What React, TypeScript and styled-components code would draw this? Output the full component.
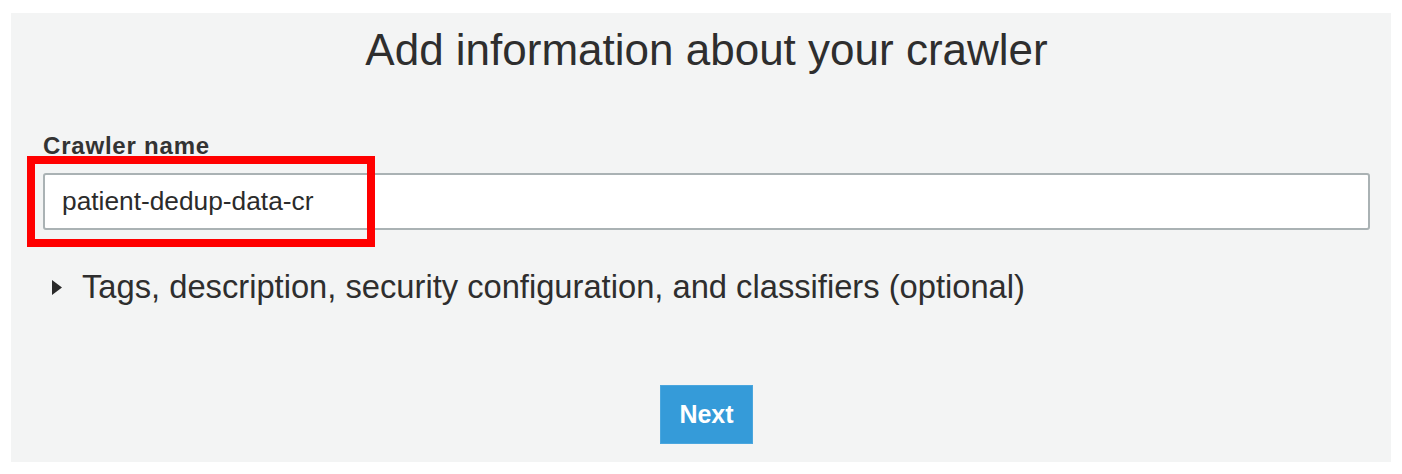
import React from "react";
import styled, { createGlobalStyle } from "styled-components";

const Global = createGlobalStyle`
  html, body { margin: 0; padding: 0; background: #ffffff; }
  body { font-family: "Liberation Sans", Arial, Helvetica, sans-serif; }
  * { box-sizing: border-box; }
`;

const Page = styled.div`
  padding: 13px 11px 0 11px;
`;

const Panel = styled.section`
  width: 1380px;
  height: 449px;
  background: #f3f4f4;
  padding: 12px 21px 0 32px;
  display: flex;
  flex-direction: column;
  color: #2e2e2e;
`;

const Title = styled.h1`
  margin: 0;
  font-size: 44px;
  font-weight: 400;
  line-height: 50px;
  text-align: center;
  color: #2e2e2e;
`;

const Field = styled.div`
  margin-top: 57px;
  display: flex;
  flex-direction: column;
  gap: 13px;
`;

const Label = styled.label`
  font-size: 24px;
  font-weight: 700;
  line-height: 28px;
  letter-spacing: 0.8px;
  color: #333;
`;

const InputWrap = styled.div`
  position: relative;
`;

const Input = styled.div`
  height: 57px;
  background: #fff;
  border: 2px solid #aab2b4;
  border-radius: 3px;
  padding: 0 17px;
  display: flex;
  align-items: center;
  font-size: 26.3px;
  color: #2b2b2b;
`;

const Highlight = styled.div`
  position: absolute;
  left: -16px;
  top: -17px;
  width: 348px;
  height: 91px;
  border: 8px solid #ff0000;
  pointer-events: none;
`;

const Expander = styled.div`
  margin-top: 38px;
  display: flex;
  align-items: center;
  gap: 20px;
  padding-left: 9px;
  font-size: 32.7px;
  line-height: 38px;
  color: #2e2e2e;
`;

const Caret = styled.svg`
  flex: none;
  width: 10px;
  height: 15px;
`;

const Actions = styled.div`
  margin-top: 79px;
  display: flex;
  justify-content: center;
`;

const Button = styled.button`
  width: 93px;
  height: 59px;
  background: #359bd9;
  border: 1px solid #4aa6de;
  color: #fff;
  font-family: "Liberation Sans", Arial, sans-serif;
  font-size: 25px;
  font-weight: 700;
  padding: 0;
`;

export default function App() {
  return (
    <Page>
      <Global />
      <Panel>
        <Title>Add information about your crawler</Title>
        <Field>
          <Label>Crawler name</Label>
          <InputWrap>
            <Input>patient-dedup-data-cr</Input>
            <Highlight />
          </InputWrap>
        </Field>
        <Expander>
          <Caret viewBox="0 0 10 15">
            <path d="M0 0 L10 7.5 L0 15 Z" fill="#2a2a2a" />
          </Caret>
          <span>Tags, description, security configuration, and classifiers (optional)</span>
        </Expander>
        <Actions>
          <Button>Next</Button>
        </Actions>
      </Panel>
    </Page>
  );
}
